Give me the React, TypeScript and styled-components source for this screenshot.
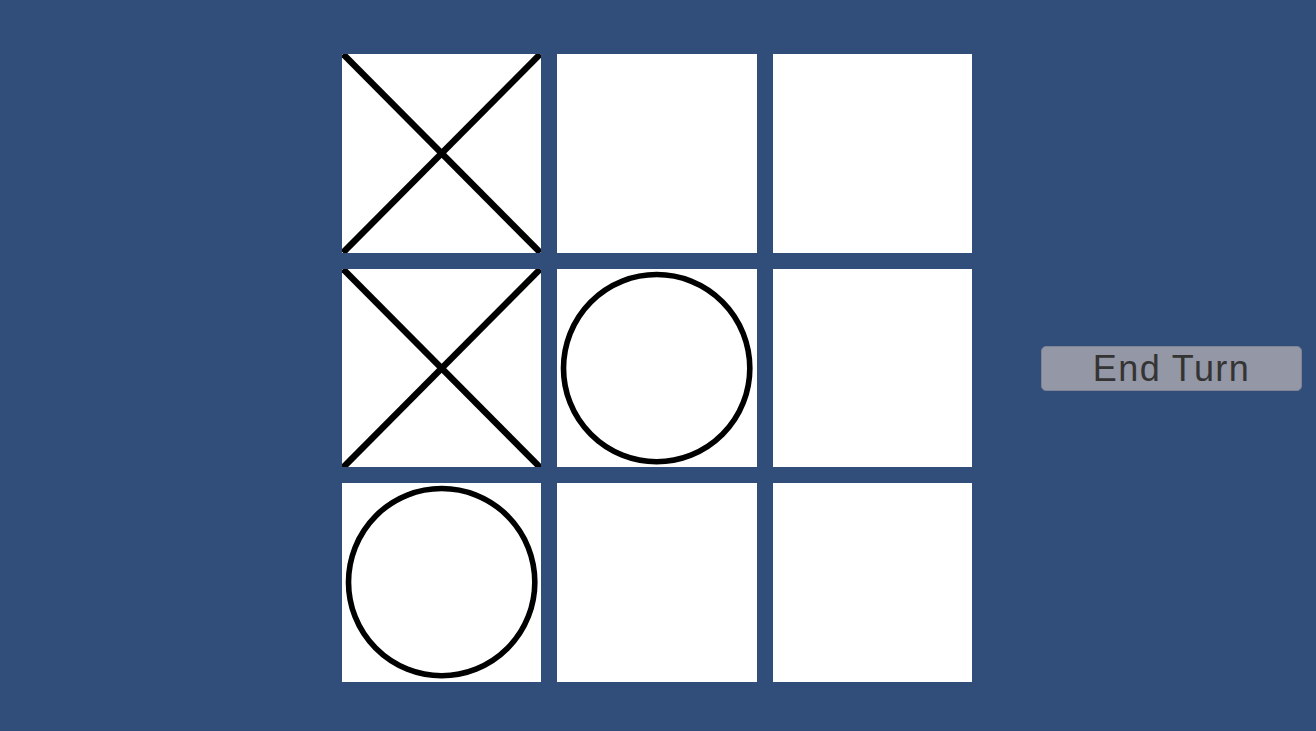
import React, { ReactElement } from "react";
import styled, { createGlobalStyle } from "styled-components";

const GlobalStyle = createGlobalStyle`
	html, body {
		margin: 0;
		padding: 0;
		background: #314d79;
	}
	#root {
		min-height: 100vh;
	}
`;

const Page = styled.div`
	display: flex;
	align-items: center;
	gap: 69px;
	box-sizing: border-box;
	height: 731px;
	padding: 54px 0 49px 342px;
	background: #314d79;
	overflow: hidden;
`;

const Board = styled.div`
	display: grid;
	grid-template-columns: repeat(3, 199.33px);
	grid-template-rows: repeat(3, 198.67px);
	gap: 16px;
`;

const Cell = styled.div`
	position: relative;
	background: #ffffff;
	overflow: hidden;

	svg {
		display: block;
		width: 100%;
		height: 100%;
	}
`;

const EndTurnButton = styled.button`
	width: 261px;
	height: 45px;
	padding: 0;
	border: 1px solid #7e8396;
	border-radius: 5px;
	background: #9497a5;
	color: #343434;
	font-family: "Liberation Sans", Arial, sans-serif;
	font-size: 36px;
	letter-spacing: 1.4px;
	line-height: 44px;
	cursor: pointer;
`;

type Mark = "x" | "o" | "";

const board: Mark[] = ["x", "", "", "x", "o", "", "o", "", ""];

function Cross(): ReactElement {
	return (
		<svg viewBox="0 0 199 199" preserveAspectRatio="none">
			<line x1="1" y1="0" x2="198" y2="199" stroke="#000" strokeWidth="6.4" />
			<line x1="198" y1="0" x2="1" y2="199" stroke="#000" strokeWidth="6.4" />
		</svg>
	);
}

function Nought(): ReactElement {
	return (
		<svg viewBox="0 0 199 199" preserveAspectRatio="none">
			<ellipse
				cx="99.5"
				cy="99.3"
				rx="93"
				ry="93.8"
				fill="none"
				stroke="#000"
				strokeWidth="5.6"
			/>
		</svg>
	);
}

export default function App(): ReactElement {
	return (
		<>
			<GlobalStyle />
			<Page>
				<Board>
					{board.map((mark, i) => (
						<Cell key={i}>
							{mark === "x" && <Cross />}
							{mark === "o" && <Nought />}
						</Cell>
					))}
				</Board>
				<EndTurnButton>End Turn</EndTurnButton>
			</Page>
		</>
	);
}
